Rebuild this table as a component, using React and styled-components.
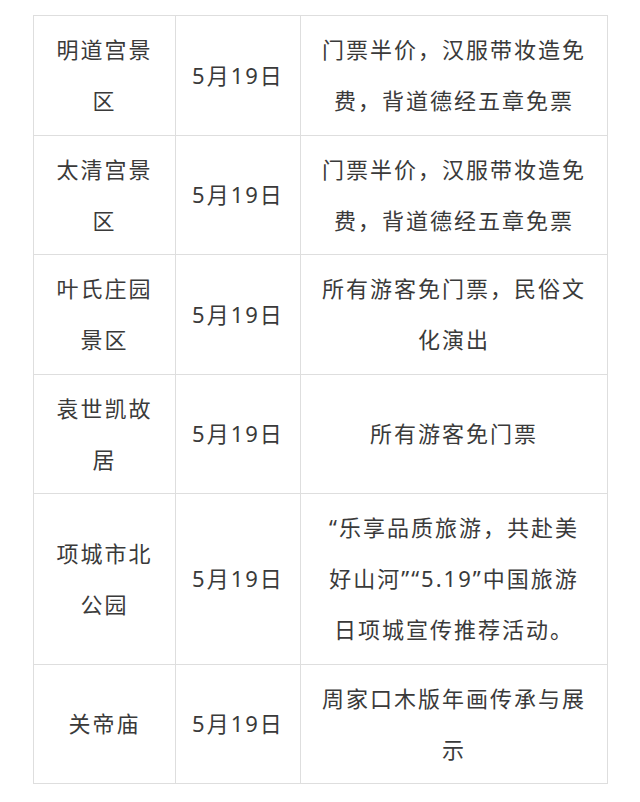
import styled, { createGlobalStyle } from 'styled-components';

const Global = createGlobalStyle`
body {
  margin: 0;
  background: #fff;
}
`

const Page = styled.div`
padding: 15px 33px;
font-family: 'Noto Sans', 'Noto Sans CJK SC', sans-serif;
color: #3a3a3a;
`

const Table = styled.table`
border-collapse: collapse;
table-layout: fixed;
width: 574px;
`

const Col = styled.col`
width: ${p => p.$w}px;
`

const Cell = styled.td`
border: 1px solid #dedede;
padding: 8px ${p => p.$side || 14}px 8.5px;
font-size: 22px;
letter-spacing: 2px;
line-height: 51px;
text-align: center;
vertical-align: middle;
word-break: break-all;
white-space: ${p => (p.$nowrap ? 'nowrap' : 'normal')};
`

const rows = [
  ['明道宫景区', '门票半价，汉服带妆造免费，背道德经五章免票'],
  ['太清宫景区', '门票半价，汉服带妆造免费，背道德经五章免票'],
  ['叶氏庄园景区', '所有游客免门票，民俗文化演出'],
  ['袁世凯故居', '所有游客免门票'],
  ['项城市北公园', '“乐享品质旅游，共赴美好山河”“5.19”中国旅游日项城宣传推荐活动。'],
  ['关帝庙', '周家口木版年画传承与展示'],
];

export default function App() {
  return (
    <Page>
      <Global />
      <Table>
        <colgroup>
          <Col $w={142} />
          <Col $w={125} />
          <Col $w={307} />
        </colgroup>
        <tbody>
          {rows.map(([place, info], i) => (
            <tr key={i}>
              <Cell>{place}</Cell>
              <Cell $side={8} $nowrap>5月19日</Cell>
              <Cell $side={18}>{info}</Cell>
            </tr>
          ))}
        </tbody>
      </Table>
    </Page>
  );
}
